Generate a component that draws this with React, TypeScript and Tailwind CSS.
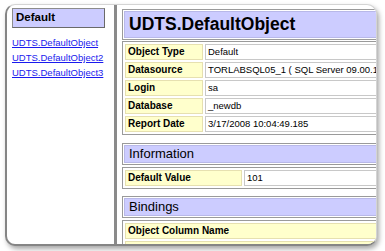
const rows1 = [
  ["Object Type", "Default"],
  ["Datasource", "TORLABSQL05_1 ( SQL Server 09.00.1399 )"],
  ["Login", "sa"],
  ["Database", "_newdb"],
  ["Report Date", "3/17/2008 10:04:49.185"],
]

function SectionHeader({ title, big }: { title: string; big?: boolean }) {
  return (
    <div className="border border-[#9a9a9a] p-px bg-white">
      <div
        className={`bg-[#ccccff] border border-[#b8b8e8] pl-[4px] flex items-center ${
          big ? "h-[27px] text-[17.5px] font-bold" : "h-[18px] text-[13px]"
        }`}
      >
        {title}
      </div>
    </div>
  )
}

function Row({ label, value, labelW }: { label: string; value?: string; labelW: string }) {
  return (
    <div className="flex gap-[2px] h-[16px]">
      <div
        className={`${labelW} shrink-0 bg-[#ffffcc] border border-[#e6e0b0] pl-[2px] text-[10px] font-bold leading-[14px]`}
      >
        {label}
      </div>
      {value !== undefined && (
        <div className="flex-1 bg-white border border-[#c8c8c8] pl-[2px] text-[9.5px] leading-[14px] whitespace-nowrap">
          {value}
        </div>
      )}
    </div>
  )
}

export default function App() {
  return (
    <div className="w-[385px] h-[251px] bg-white overflow-hidden font-['Liberation_Sans',Arial,sans-serif] text-black">
      <div className="ml-[5px] mt-[4px] w-[372px] h-[242px] rounded-[10px] border-l-2 border-b-2 border-t border-r border-l-[#858585] border-b-[#858585] border-t-[#d4d4d4] border-r-[#d4d4d4] bg-white overflow-hidden flex shadow-[2px_3px_5px_rgba(0,0,0,0.35)]">
        <aside className="w-[107px] shrink-0 pl-[5px] pt-[3px]">
          <div className="w-[93px] h-[20px] bg-[#ccccff] border border-[#8c8c8c] border-b-[#6a6a6a] border-r-[#6a6a6a] pl-[3px] flex items-center text-[11.5px] font-bold">
            Default
          </div>
          <div className="mt-[7px] flex flex-col text-[9.5px] leading-[15px] text-[#1a1aee] underline">
            <span>UDTS.DefaultObject</span>
            <span>UDTS.DefaultObject2</span>
            <span>UDTS.DefaultObject3</span>
          </div>
        </aside>
        <div className="w-[3px] shrink-0 bg-[#8a8a8a]" />
        <main className="flex-1 overflow-hidden pl-[5px] pt-[4px]">
          <div className="w-[300px]">
            <SectionHeader title="UDTS.DefaultObject" big />
            <div className="mt-[1px] border border-[#9a9a9a] p-[2px] flex flex-col gap-[2px]">
              {rows1.map(([l, v]) => (
                <Row key={l} label={l} value={v} labelW="w-[78px]" />
              ))}
            </div>

            <div className="mt-[8px]">
              <SectionHeader title="Information" />
            </div>
            <div className="mt-[2px] border border-[#9a9a9a] p-[2px]">
              <Row label="Default Value" value="101" labelW="w-[117px]" />
            </div>

            <div className="mt-[7px]">
              <SectionHeader title="Bindings" />
            </div>
            <div className="mt-[2px] border border-[#9a9a9a] p-[2px] flex flex-col gap-[2px]">
              <div className="h-[16px] bg-[#ffffcc] border border-[#e6e0b0] pl-[2px] text-[10px] font-bold leading-[14px]">
                Object Column Name
              </div>
              <div className="h-[16px] bg-[#ffffcc] border border-[#e6e0b0]" />
            </div>
          </div>
        </main>
      </div>
    </div>
  )
}
